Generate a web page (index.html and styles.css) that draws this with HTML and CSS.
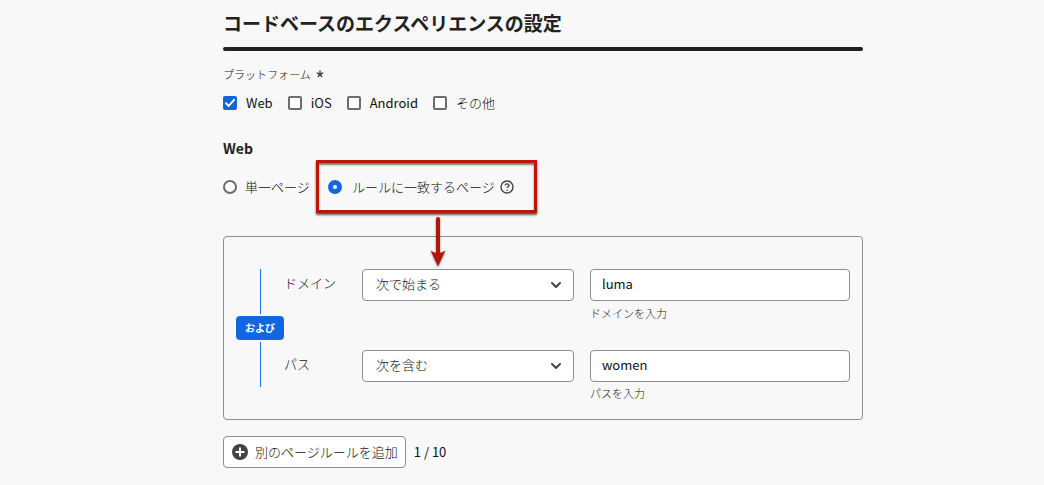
FILE: index.html
```html
<!DOCTYPE html>
<html lang="ja">
<head>
<meta charset="utf-8">
<meta name="viewport" content="width=device-width, initial-scale=1">
<title>コードベースのエクスペリエンスの設定</title>
<link rel="stylesheet" href="styles.css">
</head>
<body>
<main class="page">
  <h1 class="title">コードベースのエクスペリエンスの設定</h1>
  <fieldset class="group platforms">
    <legend class="legend">プラットフォーム <svg class="required" viewBox="0 0 8 8" aria-hidden="true"><path d="M4 4V.5M4 4l3.300-1.100M4 4l2.100 3M4 4 1.900 7M4 4 .7 2.900"/></svg></legend>
    <div class="checks">
      <label class="choice"><input class="box" type="checkbox" checked><span>Web</span></label>
      <label class="choice"><input class="box" type="checkbox"><span>iOS</span></label>
      <label class="choice"><input class="box" type="checkbox"><span>Android</span></label>
      <label class="choice"><input class="box" type="checkbox"><span class="ja">その他</span></label>
    </div>
  </fieldset>
  <h2 class="subtitle">Web</h2>
  <div class="radios">
    <label class="choice single"><input class="dot" type="radio" name="scope"><span class="ja">単一ページ</span></label>
    <div class="highlight">
      <label class="choice"><input class="dot" type="radio" name="scope" checked><span class="ja">ルールに一致するページ</span></label>
      <button class="help" type="button" aria-label="ヘルプ"><svg viewBox="0 0 14 14" aria-hidden="true"><circle cx="7" cy="7" r="6"/><path d="M5.2 5.500C5.200 4.400 6 3.900 7 3.900s1.900.6 1.900 1.600c0 1.200-1.800 1.300-1.800 2.600"/><path d="M7.100 9.400v1.300"/></svg></button>
      <svg class="arrow" viewBox="0 0 20 54" aria-hidden="true"><path class="shaft" d="M10 4v36"/><path class="head" d="M2.600 35.500Q10 40.500 17.400 35.500L10 51.500Z"/></svg>
    </div>
  </div>
  <section class="panel">
    <div class="connector"><span class="badge">および</span></div>
    <div class="rules">
      <div class="rule">
        <label class="name ja" for="domain-op">ドメイン</label>
        <div class="picker">
          <select class="control ja" id="domain-op"><option>次で始まる</option></select>
          <svg class="chevron" viewBox="0 0 12 8" aria-hidden="true"><path d="M2 2l4 4 4-4"/></svg>
        </div>
        <div class="value">
          <input class="control" id="domain" type="text" value="luma">
          <label class="hint" for="domain">ドメインを入力</label>
        </div>
      </div>
      <div class="rule">
        <label class="name ja" for="path-op">パス</label>
        <div class="picker">
          <select class="control ja" id="path-op"><option>次を含む</option></select>
          <svg class="chevron" viewBox="0 0 12 8" aria-hidden="true"><path d="M2 2l4 4 4-4"/></svg>
        </div>
        <div class="value">
          <input class="control" id="path" type="text" value="women">
          <label class="hint" for="path">パスを入力</label>
        </div>
      </div>
    </div>
  </section>
  <div class="actions">
    <button class="add ja" type="button"><svg class="plus" viewBox="0 0 16 16" aria-hidden="true"><circle cx="8" cy="8" r="8"/><path d="M8 3.500v9M3.500 8h9"/></svg><span class="add-text">別のページルールを追加</span></button>
    <span>1 / 10</span>
  </div>
</main>
</body>
</html>
```

FILE: styles.css
```css
* { box-sizing: border-box; }
body {
  margin: 0;
  background: #f8f8f8;
  color: #111;
  font: 400 13px/20px "Noto Sans CJK JP", "Noto Sans", sans-serif;
}
.page { padding: 0 181px 16px 223px; }
.ja, .hint, .legend { font-weight: 300; }
.ja { font-size: 13px; }
.title {
  margin: 0;
  font-size: 19px;
  line-height: 28px;
  font-weight: 700;
  padding-top: 9px;
  color: #222;
}
.title::after {
  content: "";
  display: block;
  height: 4px;
  margin-top: 10px;
  border-radius: 2px;
  background: #222;
}
.group { border: 0; margin: 0; padding: 0; min-width: 0; }
.platforms { margin-top: 15px; }
.legend {
  display: flex;
  align-items: center;
  gap: 5px;
  padding: 0;
  font-size: 11px;
  line-height: 16px;
  color: #222;
}
.required { width: 8px; height: 8px; fill: none; stroke: #444; stroke-width: 1.4; }
.checks { display: flex; gap: 15px; margin-top: 11px; }
.choice { display: flex; align-items: center; gap: 10px; white-space: nowrap; }
.checks .choice { gap: 9px; }
.box, .dot { appearance: none; flex: none; margin: 0; width: 14px; height: 14px; border: 2px solid #6d6d6d; background: #fff; }
.box { border-radius: 2px; }
.box:checked {
  border-color: #1266dc;
  background: #1266dc url("data:image/svg+xml,%3Csvg xmlns='http://www.w3.org/2000/svg' viewBox='0 0 10 10'%3E%3Cpath d='M1 5.200l2.700 2.800L9 1.800' fill='none' stroke='white' stroke-width='1.900' stroke-linecap='round' stroke-linejoin='round'/%3E%3C/svg%3E") center / 10px 10px;
}
.dot { border-radius: 50%; }
.dot:checked { border: 5px solid #1266e2; }
.subtitle { margin: 25px 0 0; font-size: 14px; line-height: 20px; font-weight: 700; color: #222; }
.radios { display: flex; align-items: center; gap: 8px; margin-top: 2px; }
.single { width: 85px; gap: 8px; }
.highlight {
  position: relative;
  display: flex;
  align-items: center;
  gap: 5px;
  width: 221px;
  height: 53px;
  padding-left: 9px;
  border: 3px solid #bd1608;
  box-shadow: 0 2px 2px #555, inset 0 2px 2px #777;
}
.help { display: flex; padding: 0; border: 0; background: none; }
.help svg { width: 14px; height: 14px; fill: none; stroke: #444; stroke-width: 1.4; }
.arrow { position: absolute; left: 109px; top: 52px; width: 20px; height: 54px; filter: drop-shadow(0 1px 1px #888); }
.shaft { stroke: #b3150b; stroke-width: 4; stroke-linecap: round; }
.head { fill: #b3150b; }
.panel {
  display: flex;
  margin-top: 23px;
  padding: 32px 12px 17px;
  border: 1px solid #8e8e8e;
  border-radius: 4px;
}
.connector {
  display: flex;
  flex-direction: column;
  align-items: center;
  align-self: flex-start;
  width: 48px;
  gap: 2px;
  height: 118px;
}
.connector::before, .connector::after { content: ""; flex: 1; width: 1px; background: #1473e6; }
.badge {
  width: 100%;
  border-radius: 4px;
  background: #1266e2;
  color: #fff;
  font-size: 10px;
  font-weight: 700;
  line-height: 24px;
  text-align: center;
}
.rules { flex: 1; min-width: 0; display: flex; flex-direction: column; gap: 27px; }
.rule { display: grid; grid-template-columns: 62px minmax(0, 212fr) minmax(0, 260fr); column-gap: 16px; align-items: start; }
.name { line-height: 28px; }
.picker { position: relative; }
.control {
  display: block;
  width: 100%;
  height: 32px;
  margin: 0;
  padding: 0 11px 3px;
  border: 1px solid #8e8e8e;
  border-radius: 4px;
  background: #fff;
  color: #111;
  font-family: inherit;
  font-size: 13px;
  font-weight: 400;
}
select.control { appearance: none; padding: 0 32px 3px 13px; font-weight: 300; }
.chevron { position: absolute; right: 12px; top: 12px; width: 12px; height: 8px; fill: none; stroke: #444; stroke-width: 2; stroke-linecap: round; stroke-linejoin: round; pointer-events: none; }
.hint { display: block; margin-top: 3px; font-size: 11px; line-height: 18px; color: #222; }
.rules { padding-bottom: 1px; }
.rule + .rule { margin-top: 1px; }
.rule:last-child .hint { line-height: 16px; }
.actions { display: flex; align-items: center; gap: 8px; margin-top: 16px; }
.add {
  display: flex;
  align-items: center;
  gap: 7px;
  height: 32px;
  padding: 0 7px 0 8px;
  border: 1px solid #8e8e8e;
  border-radius: 4px;
  background: #fff;
  color: #111;
  font-family: inherit;
  white-space: nowrap;
}
.add-text { padding-bottom: 2px; }
.plus { width: 16px; height: 16px; fill: #444; stroke: none; }
.plus path { stroke: #fff; stroke-width: 2; }
```
